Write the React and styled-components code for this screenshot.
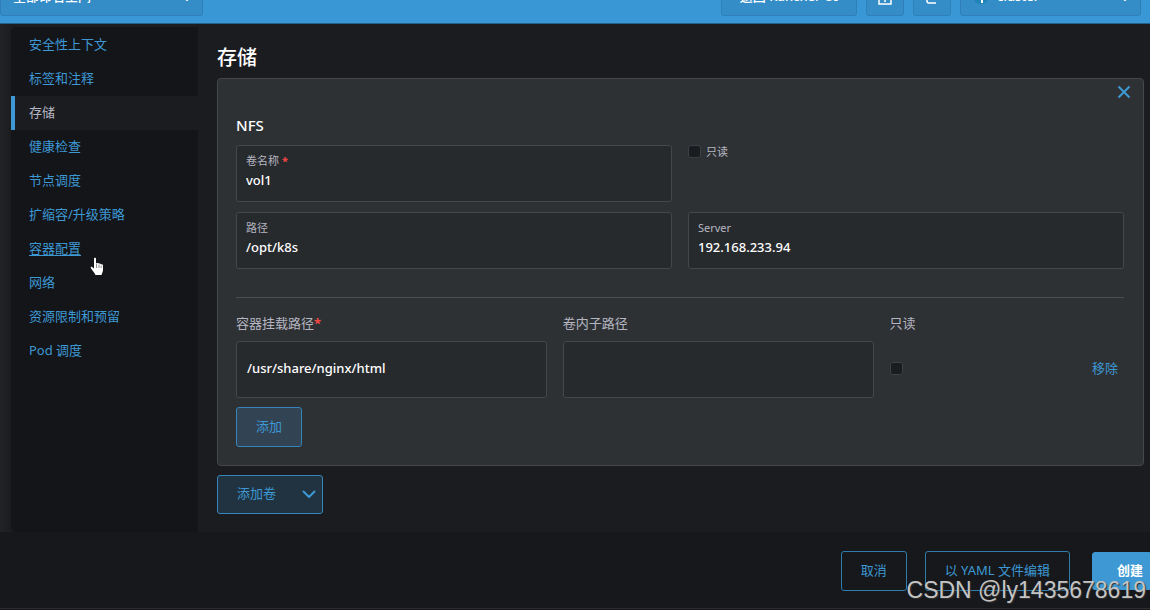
import React from 'react';
import styled, { createGlobalStyle, css } from 'styled-components';

const Global = createGlobalStyle`
  * { box-sizing: border-box; }
  body {
    margin: 0;
    background: #17181b;
    color: #fff;
    font: 13px/20px "Noto Sans", "Noto Sans CJK SC", sans-serif;
    overflow: hidden;
  }
  button, input, select { font: inherit; color: inherit; margin: 0; }
`;

const Page = styled.div`
  position: relative;
  min-height: 100vh;
  display: flex;
  flex-direction: column;
  background: #17181b;
`;

const Header = styled.header`
  height: 24px;
  flex: none;
  display: flex;
  align-items: flex-end;
  gap: 9px;
  padding: 0 9px 7px 0;
  background: #3897d4;
  border-bottom: 1px solid #22618c;
  overflow: hidden;
  font-weight: 500;
`;

const headerBox = css`
  height: 40px;
  flex: none;
  background: #358dc8;
  border: 1px solid #2f80b8;
  border-radius: 3px;
`;

const HeaderButton = styled.button`
  ${headerBox}
  display: flex;
  align-items: center;
  justify-content: center;
  width: ${p => (p.$wide ? 136 : 38)}px;
  padding: 0;
`;

const Picker = styled.label`
  ${headerBox}
  display: flex;
  align-items: center;
  gap: 8px;
  width: ${p => p.$width}px;
  padding: 0 8px 0 12px;
  margin-right: ${p => (p.$push ? 'auto' : 0)};
`;

const PickerSelect = styled.select`
  flex: 1;
  min-width: 0;
  appearance: none;
  border: 0;
  padding: 0;
  height: 20px;
  background: transparent;
`;

const Body = styled.div`
  display: flex;
  padding: 3px 0 0 11px;
  background: linear-gradient(90deg, #212327, #1b1c20 11px);
`;

const Side = styled.nav`
  width: 187px;
  flex: none;
  padding-top: 1px;
  background: #141519;
  border-radius: 5px 0 0 5px;
`;

const SideItem = styled.a`
  display: flex;
  align-items: center;
  height: 34px;
  padding: 0 0 3px ${p => (p.$active ? 14 : 18)}px;
  border-left: ${p => (p.$active ? '4px solid #3d98d3' : '0')};
  background: ${p => (p.$active ? '#1b1c20' : 'transparent')};
  color: ${p => (p.$active ? '#b6b6c2' : '#3d98d3')};
  text-decoration: ${p => (p.$hover ? 'underline' : 'none')};
  text-underline-offset: 2px;
`;

const Main = styled.main`
  flex: 1;
  min-width: 0;
  padding: 17px 6px 18px 19px;
`;

const Title = styled.h1`
  margin: 0 0 6px;
  font-size: 20px;
  line-height: 28px;
  font-weight: 500;
`;

const Card = styled.section`
  position: relative;
  padding: 35px 19px 18px 18px;
  background: #2e3134;
  border: 1px solid #44474b;
  border-radius: 4px;
  margin-bottom: 9px;
`;

const Close = styled.button`
  position: absolute;
  top: 6px;
  right: 12px;
  width: 14px;
  height: 14px;
  padding: 0;
  border: 0;
  background: none;
  display: flex;
`;

const CardTitle = styled.h2`
  margin: 0 0 9px;
  font-size: 15px;
  line-height: 22px;
  font-weight: 500;
`;

const Pair = styled.div`
  display: grid;
  grid-template-columns: 1fr 1fr;
  gap: 16px;
  margin-bottom: 10px;
`;

const Field = styled.label`
  display: block;
  height: 57px;
  padding: 6px 9px;
  background: #272a2d;
  border: 1px solid #44474b;
  border-radius: 3px;
`;

const Caption = styled.span`
  display: block;
  font-size: 11px;
  line-height: 18px;
  color: #b6b6c2;
`;

const Value = styled.input`
  display: block;
  width: 100%;
  height: 20px;
  padding: 0;
  border: 0;
  background: transparent;
  font-weight: 500;
`;

const Star = styled.span`
  color: #f64747;
  font-weight: 700;
`;

const CheckLabel = styled.label`
  display: flex;
  align-items: center;
  align-self: start;
  gap: 5px;
  height: 13px;
  font-size: 11px;
  color: #b6b6c2;
`;

const Check = styled.input`
  appearance: none;
  width: 13px;
  height: 13px;
  background: #1b1c20;
  border: 1px solid #3c3f43;
  border-radius: 3px;
`;

const Rule = styled.hr`
  margin: 28px 0 15px;
  border: 0;
  border-top: 1px solid #4a4d51;
`;

const Mounts = styled.div`
  display: grid;
  grid-template-columns: 35% 35% 1fr;
  column-gap: 16px;
  row-gap: 8px;
  margin-bottom: 9px;
`;

const MountHead = styled.label`
  color: #b6b6c2;
`;

const MountInput = styled.input`
  width: 100%;
  height: 57px;
  padding: 0 10px 3px;
  background: #272a2d;
  border: 1px solid #44474b;
  border-radius: 3px;
  font-weight: 500;
`;

const MountEnd = styled.div`
  display: flex;
  align-items: center;
  justify-content: space-between;
  padding: 0 6px 3px 0;
`;

const LinkButton = styled.button`
  padding: 0;
  border: 0;
  background: none;
  && { color: #3d98d3; }
`;

const fills = {
  plain: ['transparent', '#2f7cad'],
  soft: ['#324353', '#3585ba'],
  deep: ['#213340', '#3585ba'],
  solid: ['#3d98d3', '#3d98d3'],
};

const Button = styled.button`
  display: flex;
  align-items: center;
  height: ${p => (p.$kind === 'deep' ? 39 : 40)}px;
  padding: 0 ${p => (p.$kind === 'deep' ? 6 : 19)}px 3px 19px;
  gap: 26px;
  border: 1px solid ${p => fills[p.$kind || 'plain'][1]};
  border-radius: 3px;
  background: ${p => fills[p.$kind || 'plain'][0]};
  && { color: #3d98d3; }
`;

const Submit = styled(Button)`
  height: 38px;
  padding: 0 6px 3px 24px;
  margin-left: 4px;
  border-radius: 3px 0 0 3px;
  font-weight: 700;
  && { color: #fff; }
`;

const Footer = styled.footer`
  flex: 1;
  display: flex;
  align-items: center;
  justify-content: flex-end;
  gap: 18px;
  padding-top: 2px;
  border-bottom: 1px solid #2e2b31;
  margin-bottom: 1px;
`;

const Cursor = styled.svg`
  position: absolute;
  left: 90px;
  top: 257px;
`;

const Watermark = styled.div`
  position: absolute;
  right: 4px;
  bottom: 5px;
  font-family: "Liberation Sans", sans-serif;
  font-size: 23px;
  line-height: 30px;
  color: #c4c4c5;
  text-shadow: 1px 1px 1px #333;
`;

const Chevron = ({ size, color }) => (
  <svg width={size} height={size} viewBox="0 0 14 14" fill="none" stroke={color} strokeWidth="2" strokeLinecap="round" strokeLinejoin="round">
    <path d="M1.500 5.500 7 11l5.500-5.500" />
  </svg>
);

const sections = ['安全性上下文', '标签和注释', '存储', '健康检查', '节点调度', '扩缩容/升级策略', '容器配置', '网络', '资源限制和预留', 'Pod 调度'];

export default function App() {
  return (
    <Page>
      <Global />
      <Header>
        <Picker $width={203} $push>
          <PickerSelect aria-label="命名空间"><option>全部命名空间</option></PickerSelect>
          <Chevron size={14} color="#fff" />
        </Picker>
        <HeaderButton $wide>返回 Rancher UI</HeaderButton>
        <HeaderButton aria-label="导入">
          <svg width="16" height="18" viewBox="0 0 16 18" fill="none" stroke="#fff" strokeWidth="1.500"><path d="M8 15V2M4 6l4-4 4 4M2 13v4h12v-4" /></svg>
        </HeaderButton>
        <HeaderButton aria-label="复制">
          <svg width="14" height="16" viewBox="0 0 14 16" fill="none" stroke="#fff" strokeWidth="1.500"><path d="M5 1h8v10H5zM2 5v8q0 2 2 2h7" /></svg>
        </HeaderButton>
        <Picker $width={181}>
          <svg width="16" height="16" viewBox="0 0 16 16"><circle cx="8" cy="8" r="8" fill="#1f84b5" /><path d="M4 7h6v8H8V10z" fill="#fff" /></svg>
          <PickerSelect aria-label="集群"><option>cluster</option></PickerSelect>
          <Chevron size={14} color="#fff" />
        </Picker>
      </Header>
      <Body>
        <Side>
          {sections.map(s => (
            <SideItem key={s} href="#" $active={s === '存储'} $hover={s === '容器配置'}>{s}</SideItem>
          ))}
        </Side>
        <Main>
          <Title>存储</Title>
          <Card>
            <Close aria-label="关闭">
              <svg width="14" height="14" viewBox="0 0 14 14" stroke="#3d98d3" strokeWidth="2"><path d="M1.500 1.500l11 11M12.500 1.500l-11 11" /></svg>
            </Close>
            <CardTitle>NFS</CardTitle>
            <Pair>
              <Field><Caption>卷名称 <Star>*</Star></Caption><Value defaultValue="vol1" /></Field>
              <CheckLabel><Check type="checkbox" />只读</CheckLabel>
            </Pair>
            <Pair>
              <Field><Caption>路径</Caption><Value defaultValue="/opt/k8s" /></Field>
              <Field><Caption>Server</Caption><Value defaultValue="192.168.233.94" /></Field>
            </Pair>
            <Rule />
            <Mounts>
              <MountHead htmlFor="mount">容器挂载路径<Star>*</Star></MountHead>
              <MountHead htmlFor="sub">卷内子路径</MountHead>
              <MountHead htmlFor="ro">只读</MountHead>
              <MountInput id="mount" defaultValue="/usr/share/nginx/html" />
              <MountInput id="sub" />
              <MountEnd><Check id="ro" type="checkbox" /><LinkButton>移除</LinkButton></MountEnd>
            </Mounts>
            <Button $kind="soft">添加</Button>
          </Card>
          <Button $kind="deep">添加卷<Chevron size={14} color="#3d98d3" /></Button>
        </Main>
      </Body>
      <Footer>
        <Button>取消</Button>
        <Button>以 YAML 文件编辑</Button>
        <Submit $kind="solid">创建</Submit>
      </Footer>
      <Cursor width="14" height="19" viewBox="0 0 14 19">
        <path d="M4 1.500c0-1 2-1 2 0v5l1-.5c1-.3 1.500 0 2 .6 1-.3 1.600 0 2 .8 1.200-.2 2 .3 2 1.300V13c0 2-1 3-1.500 5H5.500C4 15 1.500 12.500.8 11c-.4-1 .8-1.500 1.600-.8L4 11.500z" fill="#fff" />
        <path d="M6.500 7v4M9 7.500V11M11.200 8.500V11" stroke="#444" strokeWidth=".6" />
      </Cursor>
      <Watermark>CSDN @ly1435678619</Watermark>
    </Page>
  );
}
